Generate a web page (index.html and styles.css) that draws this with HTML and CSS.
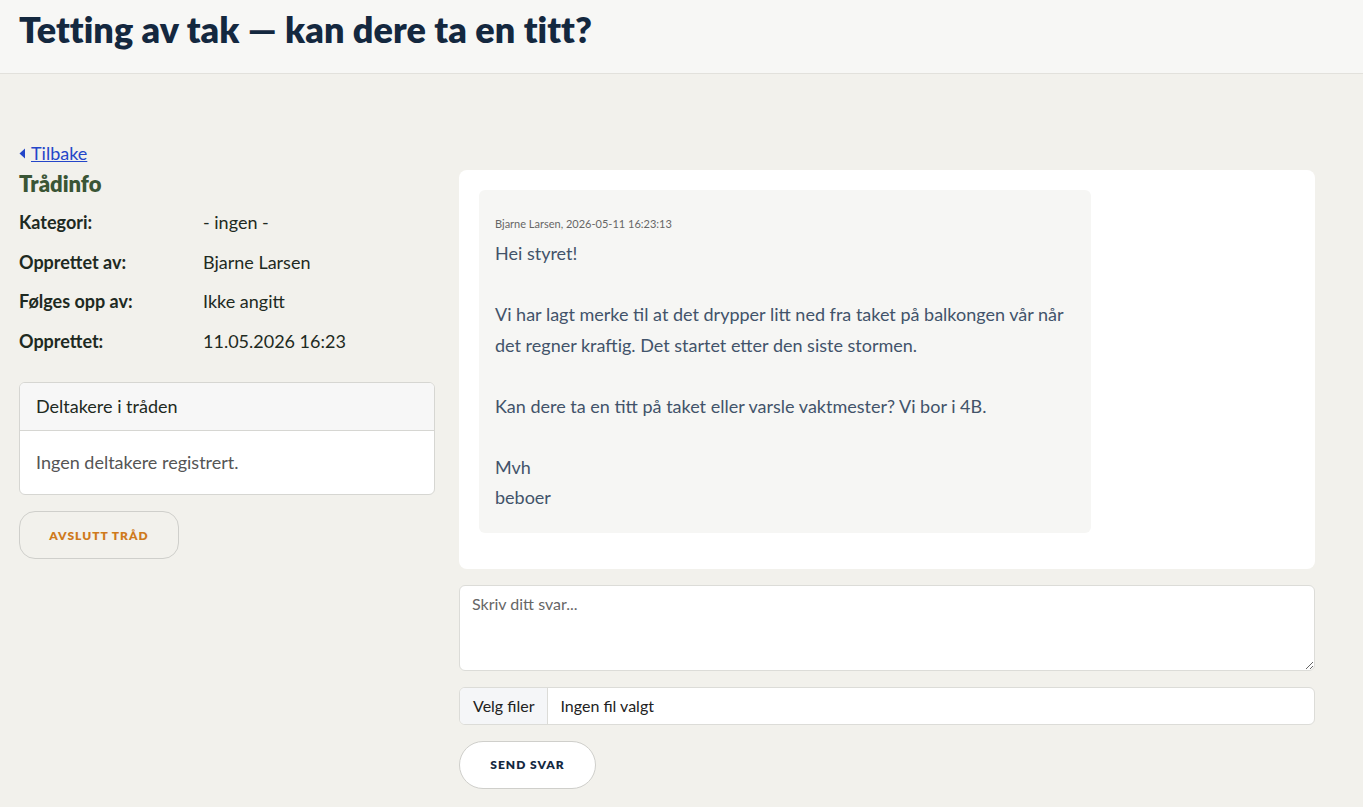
FILE: index.html
```html
<!DOCTYPE html>
<html lang="no">
<head>
    <meta charset="UTF-8">
    <meta name="viewport" content="width=device-width, initial-scale=1.0">
    <title>Tetting av tak — kan dere ta en titt?</title>
    <link rel="stylesheet" href="styles.css">
</head>
<body>

    <header class="page-header">
        <h1>Tetting av tak — kan dere ta en titt?</h1>
    </header>

    <main class="thread-layout">
        <aside class="thread-info">
            <a href="#" class="back-link">
                <svg width="7" height="11" viewBox="0 0 7 11"><path d="M6 0.5 L0.5 5.5 L6 10.5 Z" fill="currentColor"/></svg>
                Tilbake
            </a>
            <h2>Trådinfo</h2>
            <dl class="info-list">
                <dt>Kategori:</dt>
                <dd>- ingen -</dd>
                <dt>Opprettet av:</dt>
                <dd>Bjarne Larsen</dd>
                <dt>Følges opp av:</dt>
                <dd>Ikke angitt</dd>
                <dt>Opprettet:</dt>
                <dd>11.05.2026 16:23</dd>
            </dl>

            <div class="card">
                <div class="card-header">Deltakere i tråden</div>
                <div class="card-body">Ingen deltakere registrert.</div>
            </div>

            <button type="button" class="btn btn-close">Avslutt tråd</button>
        </aside>

        <section class="thread-main">
            <div class="messages">
                <div class="message">
                    <div class="message-meta">Bjarne Larsen, 2026-05-11 16:23:13</div>
                    <p>Hei styret!</p>
                    <p>Vi har lagt merke til at det drypper litt ned fra taket på balkongen vår når det regner kraftig. Det startet etter den siste stormen.</p>
                    <p>Kan dere ta en titt på taket eller varsle vaktmester? Vi bor i 4B.</p>
                    <p>Mvh<br>beboer</p>
                </div>
            </div>

            <form class="reply-form">
                <textarea placeholder="Skriv ditt svar..."></textarea>
                <label class="file-input">
                    <input type="file" multiple>
                    <span class="file-button">Velg filer</span>
                    <span class="file-name">Ingen fil valgt</span>
                </label>
                <div>
                    <button type="submit" class="btn btn-send">Send svar</button>
                </div>
            </form>
        </section>
    </main>

</body>
</html>
```

FILE: styles.css
```css
:root {
    --navy: #14283f;
    --page-bg: #f2f1ec;
    --border: #d6d6d2;
    --text-body: #42536a;
}

* {
    margin: 0;
    padding: 0;
    box-sizing: border-box;
}

body {
    font-family: 'Lato', 'Noto Sans', sans-serif;
    background: var(--page-bg);
    color: #1e2a22;
    font-size: 18px;
}

.page-header {
    background: #f7f7f5;
    border-bottom: 1px solid #e2e1dc;
    height: 74px;
    padding: 7px 19px 0;
}

.page-header h1 {
    font-size: 36px;
    font-weight: 800;
    color: var(--navy);
    letter-spacing: 0.05px;
}

.thread-layout {
    display: grid;
    grid-template-columns: 416px 856px;
    gap: 24px;
    padding: 67px 19px 19px;
}

.back-link {
    display: inline-flex;
    align-items: center;
    gap: 5px;
    color: #2446c9;
    text-decoration: underline;
}

.back-link svg {
    margin-top: 1px;
}

.thread-info h2 {
    font-size: 22px;
    font-weight: 800;
    color: #3a5535;
    margin: 6px 0 14px;
}

.info-list {
    display: grid;
    grid-template-columns: 184px 1fr;
    row-gap: 16.7px;
    margin-bottom: 29px;
}

.info-list dt {
    font-weight: 700;
    line-height: 23px;
}

.info-list dd {
    line-height: 23px;
}

.card {
    background: #fff;
    border: 1px solid var(--border);
    border-radius: 6px;
    overflow: hidden;
}

.card-header {
    background: #f7f7f7;
    border-bottom: 1px solid var(--border);
    padding: 12px 16px;
    line-height: 23px;
}

.card-body {
    padding: 20px 16px;
    color: #555;
    line-height: 23px;
}

.btn {
    font-family: inherit;
    font-size: 12px;
    font-weight: 800;
    letter-spacing: 1px;
    text-transform: uppercase;
    border: 1px solid #cfcfcb;
    cursor: pointer;
}

.btn-close {
    margin-top: 16px;
    width: 160px;
    height: 48px;
    border-radius: 16px;
    background: transparent;
    color: #cf7a1c;
}

.thread-main {
    margin-top: 29px;
}

.messages {
    background: #fff;
    border-radius: 8px;
    padding: 20px 20px 36px;
}

.message {
    max-width: 75%;
    background: #f6f6f4;
    border-radius: 6px;
    padding: 26px 16px 20px;
    color: var(--text-body);
    line-height: 30.5px;
}

.message-meta {
    font-size: 11px;
    color: #666;
    line-height: 16px;
    margin-bottom: 6px;
}

.message p + p {
    margin-top: 30.5px;
}

.reply-form {
    display: flex;
    flex-direction: column;
    gap: 16px;
    margin-top: 16px;
}

.reply-form textarea {
    width: 100%;
    height: 86px;
    border: 1px solid #dcdcd8;
    border-radius: 6px;
    padding: 8px 12px;
    font-family: inherit;
    font-size: 16px;
    color: #333;
    resize: vertical;
}

.reply-form textarea::placeholder {
    color: #666;
}

.file-input {
    display: flex;
    height: 38px;
    background: #fff;
    border: 1px solid #dcdcd8;
    border-radius: 6px;
    overflow: hidden;
    font-size: 16px;
    cursor: pointer;
}

.file-input input {
    display: none;
}

.file-button {
    display: flex;
    align-items: center;
    padding: 0 13px;
    background: #f5f6f8;
    border-right: 1px solid #dcdcd8;
    color: #222;
}

.file-name {
    display: flex;
    align-items: center;
    padding: 0 12px;
    color: #222;
}

.btn-send {
    width: 137px;
    height: 48px;
    border-radius: 24px;
    background: #fff;
    color: var(--navy);
}
```
